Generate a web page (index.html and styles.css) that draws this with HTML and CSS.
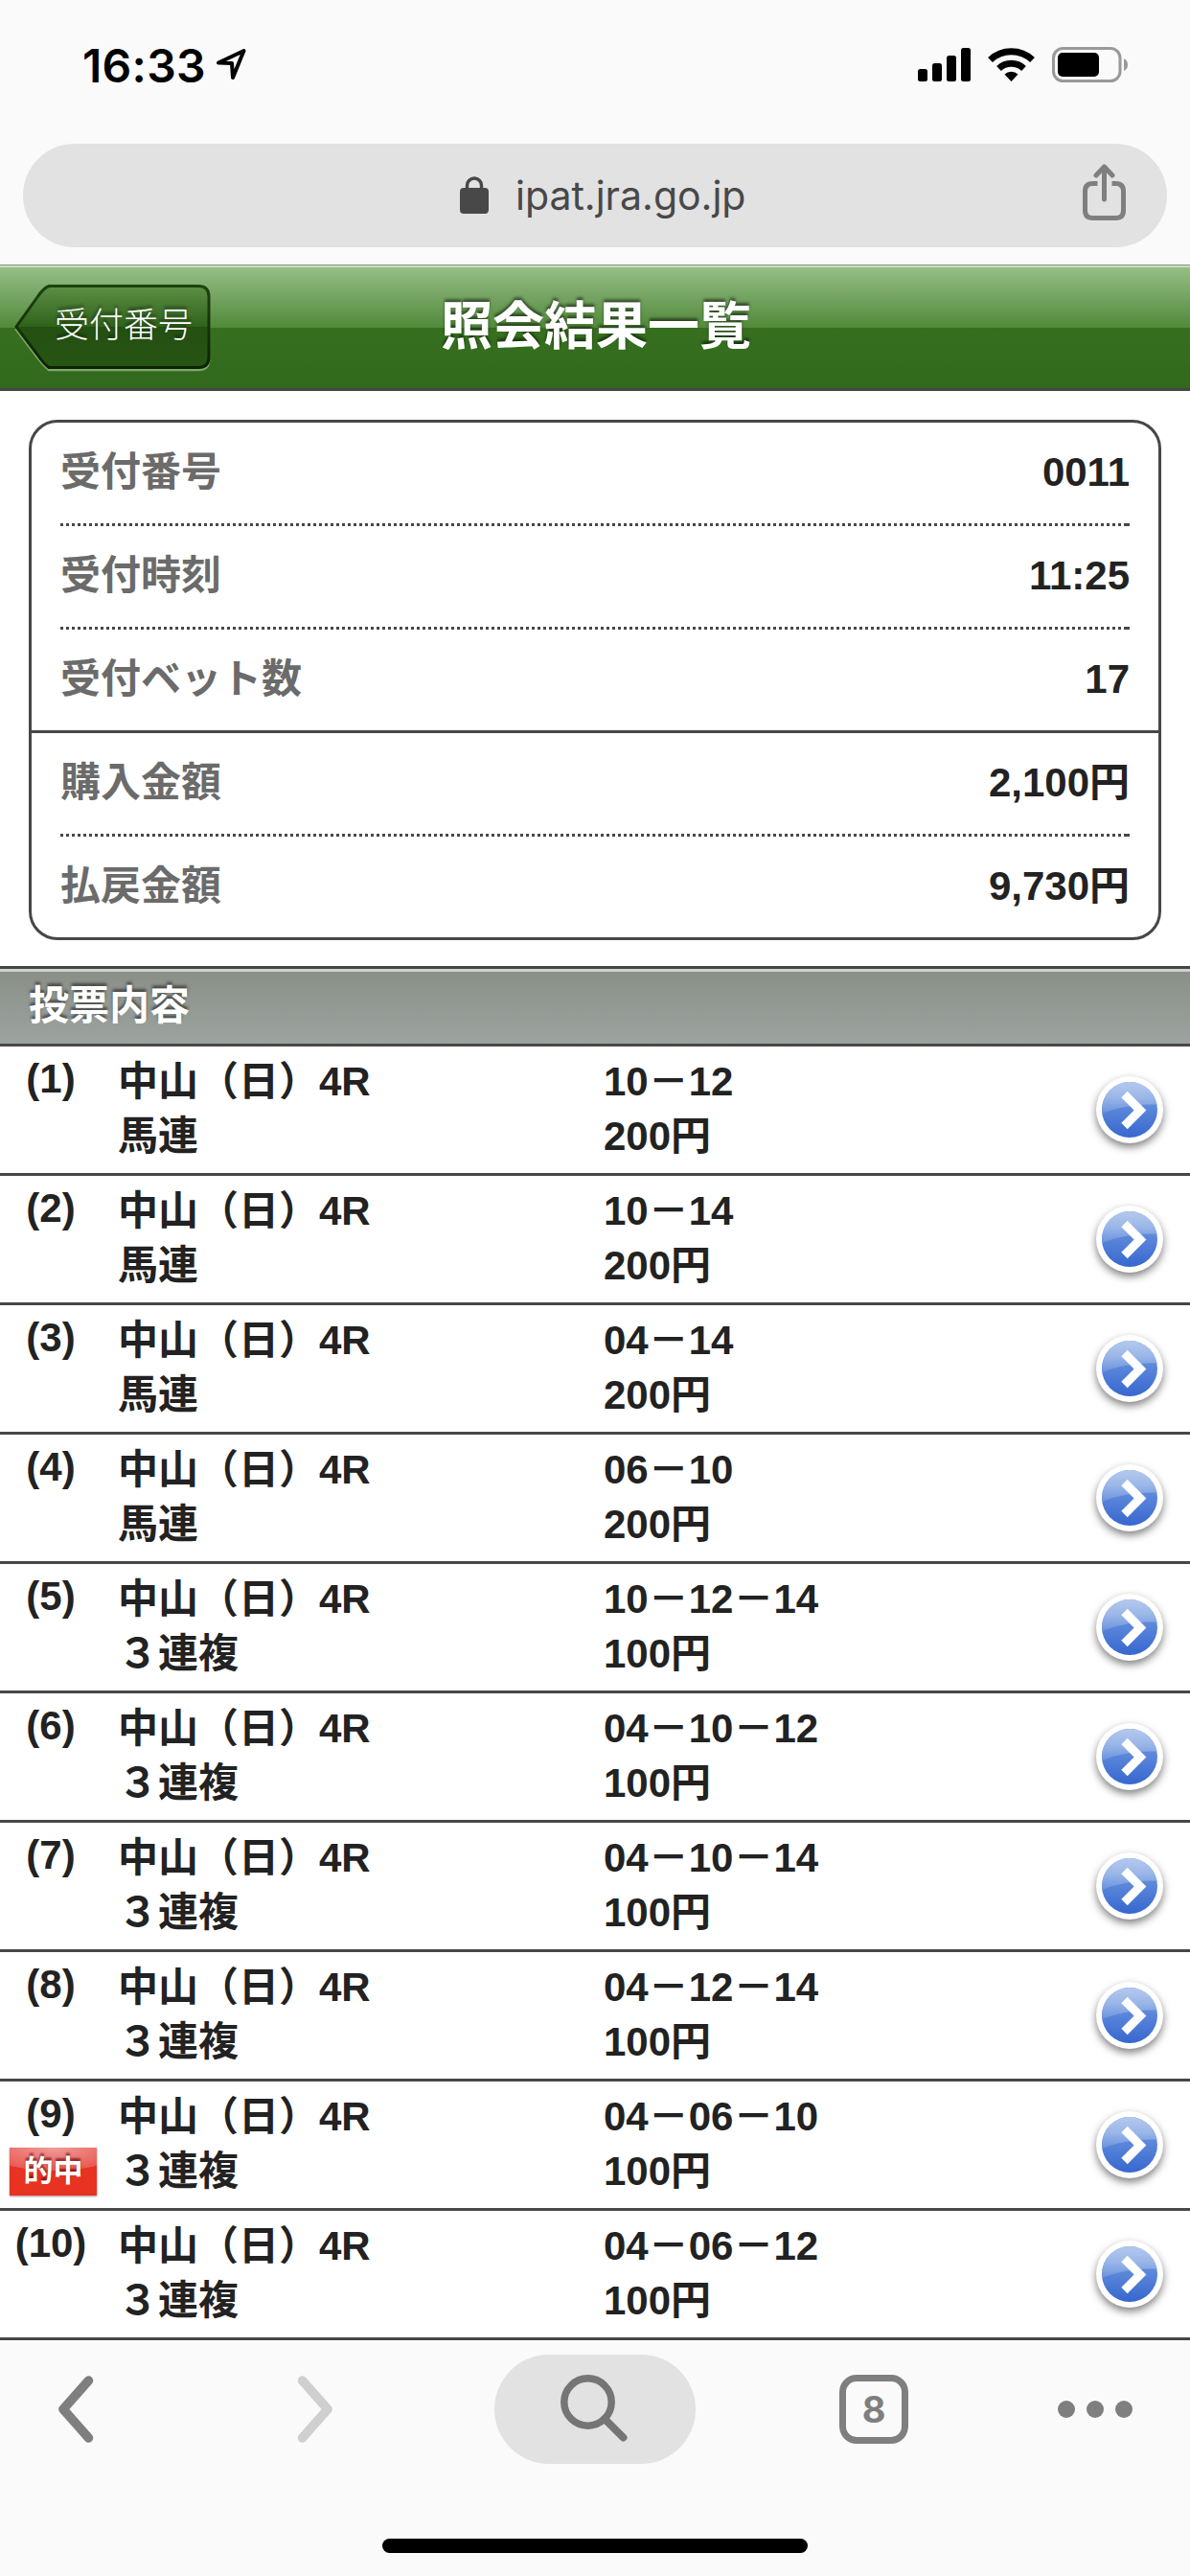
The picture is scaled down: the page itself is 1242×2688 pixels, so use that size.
FILE: index.html
```html
<!DOCTYPE html>
<html lang="ja">
<head>
<meta charset="utf-8">
<title>照会結果一覧</title>
<link rel="stylesheet" href="styles.css">
</head>
<body>
<svg width="0" height="0" class="defs" aria-hidden="true">
  <defs>
    <linearGradient id="blue" gradientUnits="userSpaceOnUse" x1="0" y1="38" x2="0" y2="74"><stop offset="0" stop-color="#618cdc"/><stop offset="1" stop-color="#3767cf"/></linearGradient>
    <linearGradient id="gloss" gradientUnits="userSpaceOnUse" x1="0" y1="16" x2="0" y2="48"><stop offset="0" stop-color="#b4c9ee"/><stop offset=".5" stop-color="#9bb7e8"/><stop offset="1" stop-color="#6c94de"/></linearGradient>
    <clipPath id="disc"><circle cx="45" cy="45" r="29"/></clipPath>
    <symbol id="go" viewBox="0 0 90 90">
      <circle cx="45" cy="45" r="35" fill="#fff"/>
      <circle cx="45" cy="45" r="29" fill="url(#blue)"/>
      <path clip-path="url(#disc)" fill="url(#gloss)" d="M10 10H80V40Q45 37 16 49H10Z"/>
      <path d="M39.500 29L56 45.500L39.500 62" fill="none" stroke="#fff" stroke-width="9"/>
    </symbol>
  </defs>
</svg>

<div class="status">
  <div class="clock">16:33
    <svg class="loc" width="34" height="36" viewBox="0 0 34 36"><path d="M3 15.500L29.500 3L18 31L17 16Z" fill="none" stroke="#000" stroke-width="4" stroke-linejoin="round"/></svg>
  </div>
  <svg width="222" height="40" viewBox="956 48 222 40">
    <rect x="958" y="72" width="10" height="13" rx="2.500"/><rect x="973" y="66" width="10" height="19" rx="2.500"/><rect x="988" y="58" width="10" height="27" rx="2.500"/><rect x="1003" y="50" width="10" height="35" rx="2.500"/>
    <path d="M1033.500 62.500A32 32 0 0 1 1077.500 62.500M1042.500 71.500A19 19 0 0 1 1068.500 71.500" fill="none" stroke="#000" stroke-width="7"/>
    <path d="M1055.500 85L1048.500 77.500A10 10 0 0 1 1062.500 77.500Z"/>
    <rect x="1099.500" y="50.500" width="69.500" height="34" rx="10" fill="none" stroke="#999" stroke-width="3"/>
    <rect x="1104" y="55" width="43" height="25" rx="5"/>
    <path d="M1173 61Q1177 63 1177 67.500T1173 74Z" fill="#999"/>
  </svg>
</div>

<div class="addressbar">
  <div class="address">
    <svg width="30" height="40" viewBox="0 0 30 40"><rect y="12" width="30" height="27" rx="4" fill="#484848"/><path d="M7.500 14V9.500a7.500 7.500 0 0 1 15 0V14" fill="none" stroke="#484848" stroke-width="3.400"/></svg>
    <span class="url">ipat.jra.go.jp</span>
    <svg class="share" width="46" height="60" viewBox="0 0 46 60" fill="none" stroke="#7f7f7f" stroke-width="5"><path d="M15.500 20.500H10.500Q2.500 20.500 2.500 28.500V48.500Q2.500 56.500 10.500 56.500H34.500Q42.500 56.500 42.500 48.500V28.500Q42.500 20.500 34.500 20.500H30.500"/><path d="M22.500 37V3M14 12L22.500 3L31 12" stroke-linecap="round" stroke-linejoin="round"/></svg>
  </div>
</div>

<header class="titlebar">
  <a class="back">
    <svg class="back-shape" width="206" height="94" viewBox="0 0 206 94">
      <defs>
        <linearGradient id="bk" x1="0" y1="0" x2="0" y2="1"><stop offset="0" stop-color="#5d8f45"/><stop offset=".5" stop-color="#2f621b"/><stop offset=".5" stop-color="#245012"/><stop offset="1" stop-color="#265513"/></linearGradient>
        <linearGradient id="bs" x1="0" y1="0" x2="0" y2="1"><stop offset="0" stop-color="#1d4310"/><stop offset="1" stop-color="#0d2204"/></linearGradient>
      </defs>
      <path d="M36 5.500H192Q203 5.500 203 16.500V79.500Q203 90 192 90H36Q30 85 24 77L2 48L24 16Q30 8 36 5.500Z" fill="none" stroke="#7fa86b" stroke-width="2.500"/>
      <path d="M36 2.500H192Q203 2.500 203 13.500V76.500Q203 87.500 192 87.500H36Q30 83 24 74L2 45L24 14Q30 5 36 2.500Z" fill="url(#bk)" stroke="url(#bs)" stroke-width="3"/>
    </svg>
    <span class="back-label">受付番号</span>
  </a>
  <h1>照会結果一覧</h1>
</header>

<main>
  <dl class="card">
    <div class="line"><dt>受付番号</dt><dd>0011</dd></div>
    <div class="line"><dt>受付時刻</dt><dd>11:25</dd></div>
    <div class="line solid"><dt>受付ベット数</dt><dd>17</dd></div>
    <div class="line"><dt>購入金額</dt><dd>2,100円</dd></div>
    <div class="line last"><dt>払戻金額</dt><dd>9,730円</dd></div>
  </dl>
  <h2>投票内容</h2>
  <ul class="bets">
    <li><div class="no">(1)</div><div class="race">中山（日）4R<br>馬連</div><div class="pick">10－12<br>200円</div><svg class="go"><use href="#go"/></svg></li>
    <li><div class="no">(2)</div><div class="race">中山（日）4R<br>馬連</div><div class="pick">10－14<br>200円</div><svg class="go"><use href="#go"/></svg></li>
    <li><div class="no">(3)</div><div class="race">中山（日）4R<br>馬連</div><div class="pick">04－14<br>200円</div><svg class="go"><use href="#go"/></svg></li>
    <li><div class="no">(4)</div><div class="race">中山（日）4R<br>馬連</div><div class="pick">06－10<br>200円</div><svg class="go"><use href="#go"/></svg></li>
    <li><div class="no">(5)</div><div class="race">中山（日）4R<br>３連複</div><div class="pick">10－12－14<br>100円</div><svg class="go"><use href="#go"/></svg></li>
    <li><div class="no">(6)</div><div class="race">中山（日）4R<br>３連複</div><div class="pick">04－10－12<br>100円</div><svg class="go"><use href="#go"/></svg></li>
    <li><div class="no">(7)</div><div class="race">中山（日）4R<br>３連複</div><div class="pick">04－10－14<br>100円</div><svg class="go"><use href="#go"/></svg></li>
    <li><div class="no">(8)</div><div class="race">中山（日）4R<br>３連複</div><div class="pick">04－12－14<br>100円</div><svg class="go"><use href="#go"/></svg></li>
    <li><div class="no">(9)<span class="hit">的中</span></div><div class="race">中山（日）4R<br>３連複</div><div class="pick">04－06－10<br>100円</div><svg class="go"><use href="#go"/></svg></li>
    <li><div class="no">(10)</div><div class="race">中山（日）4R<br>３連複</div><div class="pick">04－06－12<br>100円</div><svg class="go"><use href="#go"/></svg></li>
  </ul>
</main>

<footer class="toolbar">
  <nav class="tools">
    <svg width="40" height="72" viewBox="0 0 40 72"><path d="M34.500 6L8 36L34.500 66" fill="none" stroke="#7f7f7f" stroke-width="9.500" stroke-linecap="round" stroke-linejoin="round"/></svg>
    <svg width="40" height="72" viewBox="0 0 40 72"><path d="M5.500 6L32 36L5.500 66" fill="none" stroke="#cfcfcf" stroke-width="9.500" stroke-linecap="round" stroke-linejoin="round"/></svg>
    <span class="search"><svg width="72" height="72" viewBox="0 0 72 72" fill="none" stroke="#757575"><circle cx="28.500" cy="28.500" r="24.700" stroke-width="7.500"/><path d="M46 46L65.500 65.500" stroke-width="8" stroke-linecap="round"/></svg></span>
    <span class="tabs">8</span>
    <span class="more"><i></i><i></i><i></i></span>
  </nav>
  <div class="home"></div>
</footer>
</body>
</html>
```
FILE: styles.css
```css
* { box-sizing: border-box; margin: 0; padding: 0; }
body {
  width: 1242px;
  height: 2688px;
  display: flex;
  flex-direction: column;
  overflow: hidden;
  background: #fff;
  color: #222;
  font-family: "Liberation Sans", "Noto Sans CJK JP", sans-serif;
}
svg { display: block; flex: none; }
.defs { position: absolute; }

.status {
  height: 150px;
  padding: 0 64px 14px 86px;
  display: flex;
  align-items: center;
  justify-content: space-between;
  background: #fafafa;
}
.clock {
  display: flex;
  align-items: center;
  gap: 10px;
  color: #000;
  font: 600 48px Inter, sans-serif;
  letter-spacing: 0.3px;
}
.addressbar { height: 126px; padding: 0 24px; background: #fafafa; }
.address {
  height: 108px;
  padding: 0 42px 0 456px;
  display: flex;
  align-items: center;
  background: #e2e2e2;
  border-radius: 54px;
}
.url {
  margin-left: 28px;
  color: #484848;
  font: 400 41px Inter, sans-serif;
}
.share { margin-left: auto; margin-top: -6px; }

.titlebar {
  height: 132px;
  padding-left: 15px;
  display: grid;
  grid-template-columns: 206px 788px;
  column-gap: 7px;
  align-items: center;
  border-top: 1px solid #7f9a77;
  border-bottom: 3px solid #474747;
  background: linear-gradient(#c9ddc1 2px, #96be87 2px, #51893a 65px, #36701f 65px, #32691d 128px);
}
.back { display: grid; align-items: center; padding-top: 3px; }
.back > * { grid-area: 1 / 1; }
.back-label {
  margin-top: -13px;
  padding-left: 42px;
  z-index: 1;
  color: #fff;
  font-family: "Noto Sans CJK JP", sans-serif;
  font-size: 36px;
  font-weight: 300;
  line-height: 50px;
  text-shadow: 0 -3px 3px rgba(0, 0, 0, .45);
}
h1 {
  color: #fff;
  font-size: 54px;
  font-weight: 700;
  line-height: 80px;
  text-align: center;
  text-shadow: 0 -3px 3px rgba(0, 0, 0, .5);
}

.card {
  margin: 30px 30px 27px;
  border: 3px solid #474747;
  border-radius: 30px;
  font-size: 42px;
  font-weight: 700;
}
.line {
  height: 108px;
  padding: 0 30px 5px;
  display: flex;
  align-items: center;
  justify-content: space-between;
  line-height: 60px;
  background:
    linear-gradient(#474747, #474747) 1143px 100% / 3px 3px no-repeat,
    repeating-linear-gradient(90deg, #474747 0 3px, transparent 3px 6px) 30px 100% / 1113px 3px no-repeat;
}
.line.solid { background: linear-gradient(#474747, #474747) 0 100% / 100% 3px no-repeat; }
.line.last { height: 105px; padding-bottom: 2px; background: none; }
dt { color: #6b6b6b; }

h2 {
  height: 84px;
  padding-left: 30px;
  border-top: 3px solid #474343;
  border-bottom: 3px solid #474747;
  background: linear-gradient(#cad3ce 3px, #8a8f88 3px, #9ca4a0 100%);
  color: #fff;
  font-size: 42px;
  font-weight: 700;
  line-height: 78px;
  text-shadow: 0 -3px 3px rgba(0, 0, 0, .5);
}
.bets { list-style: none; font-size: 42px; font-weight: 700; line-height: 57px; }
.bets li {
  height: 135px;
  display: grid;
  grid-template-columns: 106px 506px 504px 90px;
  padding-top: 8px;
  border-bottom: 3px solid #474747;
}
.no { margin-top: -3px; text-align: center; }
.race { padding-left: 17px; }
.pick { padding-left: 18px; }
.go {
  width: 90px;
  height: 90px;
  margin: 13px 0 0 18px;
  filter: drop-shadow(0 4px 4px rgba(0, 0, 0, .5));
}
.hit {
  display: block;
  width: 91px;
  height: 50px;
  margin: 7px 0 0 10px;
  background: radial-gradient(ellipse 75px 24px at 50% 0, #ef9c99 0, #ea5a52 98%, transparent 100%), #e83323;
  color: #fff;
  font-size: 31px;
  line-height: 50px;
  text-shadow: 0 -3px 2px rgba(90, 0, 0, .6);
  box-shadow: 0 1px 2px rgba(0, 0, 0, .4);
}

.toolbar { flex: 1; padding-top: 15px; background: #fafafa; }
.tools {
  height: 114px;
  display: grid;
  grid-template-columns: 156px 348px 234px 348px 114px;
  align-items: center;
  justify-items: center;
}
.search {
  width: 210px;
  height: 114px;
  display: grid;
  place-items: center;
  border-radius: 57px;
  background: #e2e2e2;
}
.tabs {
  width: 72px;
  height: 72px;
  display: grid;
  place-items: center;
  border: 7px solid #7f7f7f;
  border-radius: 18px;
  color: #7f7f7f;
  font: 700 38px Inter, sans-serif;
}
.more { display: flex; gap: 12px; }
.more i { width: 18px; height: 18px; border-radius: 50%; background: #7f7f7f; }
.home { width: 444px; height: 15px; margin: 78px auto 0; border-radius: 8px; background: #000; }
```
